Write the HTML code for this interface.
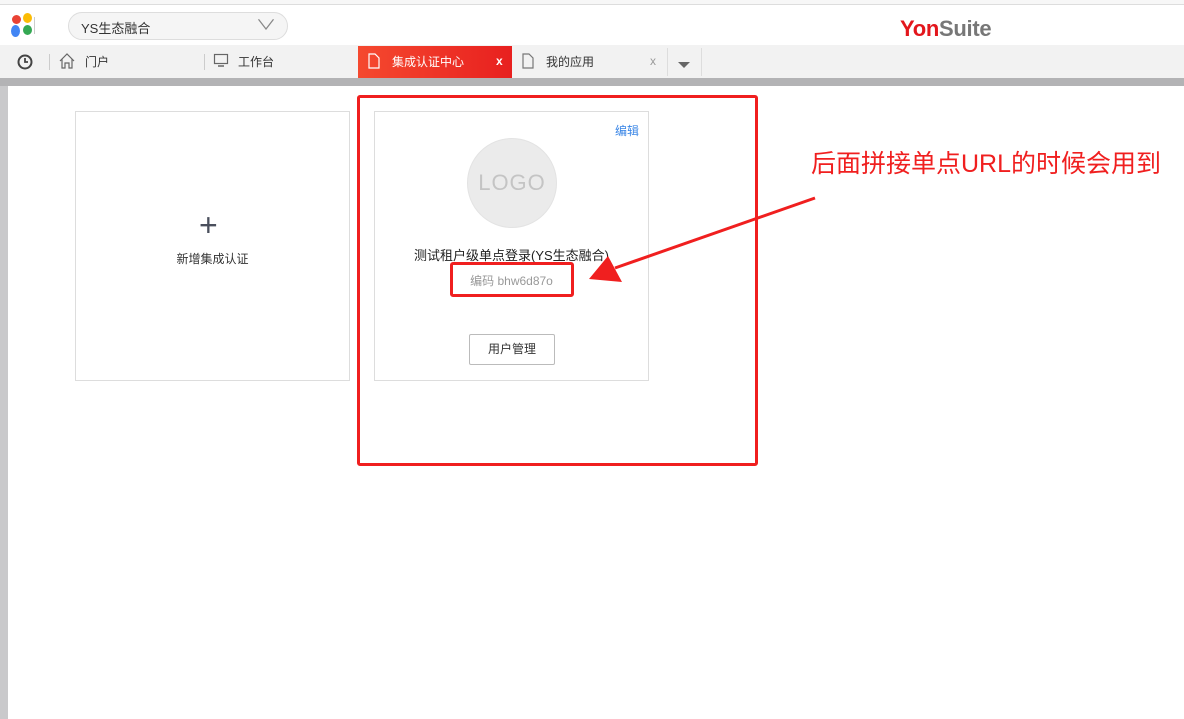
<!DOCTYPE html>
<html><head><meta charset="utf-8"><style>
*{margin:0;padding:0;box-sizing:border-box}
body{width:1184px;height:719px;overflow:hidden;background:#fff;font-family:"Liberation Sans","Noto Sans CJK SC",sans-serif;position:relative;font-size:12px;color:#333}
.a{position:absolute}
</style></head><body>
<div class="a" style="left:0;top:0;width:1184px;height:5px;background:#f7f7f7;border-bottom:1px solid #ddd"></div>
<div class="a" style="left:12px;top:15px;width:9px;height:9px;border-radius:50%;background:#e94335"></div>
<div class="a" style="left:23px;top:13px;width:9px;height:10px;border-radius:50%;background:#fbbc05"></div>
<div class="a" style="left:11px;top:25px;width:9px;height:12px;border-radius:50%;background:#4285f4"></div>
<div class="a" style="left:23px;top:25px;width:9px;height:10px;border-radius:50%;background:#34a853"></div>
<div class="a" style="left:34px;top:17px;width:1px;height:17px;background:#ccc"></div>
<div class="a" style="left:68px;top:12px;width:220px;height:28px;border:1px solid #ddd;border-radius:14px;background:#f5f5f5;padding:5px 0 0 12px;font-size:13px;color:#333">YS生态融合<span class="a" style="right:14px;top:2px;color:#888;font-size:14px;transform:scaleX(1.5)">∨</span></div>
<div class="a" style="left:900px;top:16px;font-size:22px;font-weight:bold;letter-spacing:-0.3px"><span style="color:#e3161c">Yon</span><span style="color:#777">Suite</span></div>
<div class="a" style="left:0;top:45px;width:1184px;height:33px;background:#f2f2f2"></div>
<svg class="a" style="left:16px;top:53px" width="18" height="18" viewBox="0 0 18 18"><circle cx="9" cy="9" r="6.5" fill="none" stroke="#444" stroke-width="2"/><path d="M9 5v4h3" stroke="#444" stroke-width="1.8" fill="none"/></svg>
<div class="a" style="left:49px;top:54px;width:1px;height:16px;background:#ccc"></div>
<svg class="a" style="left:58px;top:52px" width="18" height="18" viewBox="0 0 18 18"><path d="M2 9L9 2l7 7M4 7v9h3v-5h4v5h3V7" fill="none" stroke="#666" stroke-width="1.2"/></svg>
<div class="a" style="left:85px;top:53px;font-size:12px;color:#333">门户</div>
<div class="a" style="left:204px;top:54px;width:1px;height:16px;background:#ccc"></div>
<svg class="a" style="left:213px;top:53px" width="16" height="16" viewBox="0 0 16 16"><rect x="1.5" y="1.5" width="13" height="9" fill="none" stroke="#666" stroke-width="1.2"/><path d="M5 13h6" stroke="#666" stroke-width="1.5"/></svg>
<div class="a" style="left:238px;top:53px;color:#333">工作台</div>
<div class="a" style="left:358px;top:46px;width:154px;height:32px;background:linear-gradient(90deg,#f5492f,#e8201f)"></div>
<svg class="a" style="left:368px;top:53px" width="12" height="16" viewBox="0 0 12 16"><path d="M1 1h6l4 4v10H1z" fill="none" stroke="#fff" stroke-width="1.2"/></svg>
<div class="a" style="left:392px;top:53px;color:#fff">集成认证中心</div>
<div class="a" style="left:496px;top:54px;color:#fff;font-weight:bold">x</div>
<svg class="a" style="left:522px;top:53px" width="12" height="16" viewBox="0 0 12 16"><path d="M1 1h6l4 4v10H1z" fill="none" stroke="#777" stroke-width="1.2"/></svg>
<div class="a" style="left:546px;top:53px;color:#333">我的应用</div>
<div class="a" style="left:650px;top:54px;color:#999">x</div>
<div class="a" style="left:667px;top:48px;width:1px;height:28px;background:#ddd"></div>
<div class="a" style="left:701px;top:48px;width:1px;height:28px;background:#ddd"></div>
<div class="a" style="left:678px;top:62px;border:6px solid transparent;border-top:6px solid #666"></div>
<div class="a" style="left:0;top:78px;width:1184px;height:8px;background:#b3b3b5"></div>
<div class="a" style="left:0;top:86px;width:8px;height:633px;background:#c9c9cb"></div>
<div class="a" style="left:75px;top:111px;width:275px;height:270px;border:1px solid #ddd"></div>
<div class="a" style="left:199px;top:207px;font-size:32px;color:#4a4f5c">+</div>
<div class="a" style="left:75px;top:250px;width:275px;text-align:center;color:#333">新增集成认证</div>
<div class="a" style="left:374px;top:111px;width:275px;height:270px;border:1px solid #ddd"></div>
<div class="a" style="left:615px;top:122px;color:#3a86e6">编辑</div>
<div class="a" style="left:467px;top:138px;width:90px;height:90px;border-radius:50%;background:#ebebeb;border:1px solid #e3e3e3;text-align:center;line-height:88px;font-size:22px;color:#c4c4c4;letter-spacing:1px">LOGO</div>
<div class="a" style="left:374px;top:245px;width:275px;text-align:center;font-size:13px;color:#222">测试租户级单点登录(YS生态融合)</div>
<div class="a" style="left:374px;top:272px;width:275px;text-align:center;color:#999">编码 bhw6d87o</div>
<div class="a" style="left:469px;top:334px;width:86px;height:31px;border:1px solid #bbb;border-radius:2px;text-align:center;line-height:29px;color:#333">用户管理</div>
<div class="a" style="left:357px;top:95px;width:401px;height:371px;border:3px solid #f01f1f;border-radius:3px"></div>
<div class="a" style="left:450px;top:262px;width:124px;height:35px;border:3px solid #f01f1f;border-radius:3px"></div>
<svg class="a" style="left:0;top:0" width="1184" height="719"><path d="M815 198L615 268" stroke="#f01f1f" stroke-width="3"/><path d="M589 279L608 256L622 282Z" fill="#f01f1f"/></svg>
<div class="a" style="left:811px;top:144px;font-size:25px;color:#f01f1f">后面拼接单点URL的时候会用到</div>
</body></html>
